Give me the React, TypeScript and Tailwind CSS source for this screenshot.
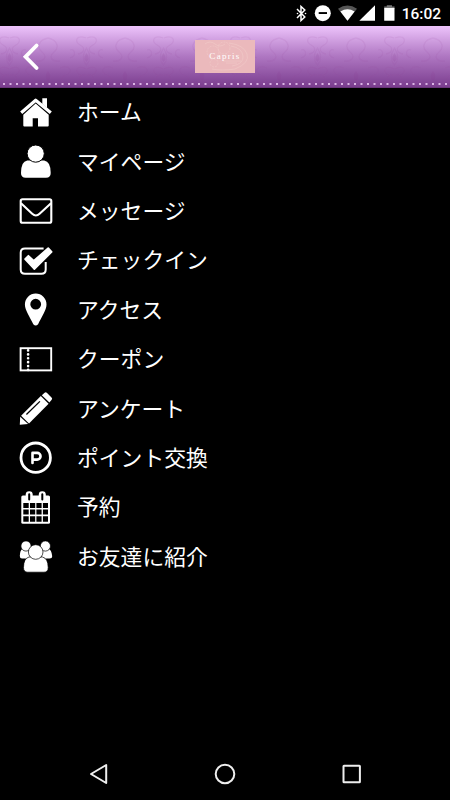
import type { ReactNode } from "react";

type MenuItem = {
  label: string;
  icon: ReactNode;
};

const menuItems: MenuItem[] = [
  {
    label: "ホーム",
    icon: (
      <>
        <path d="M23.3 2.3H28V12L23.3 8Z" />
        <path d="M2.2 16.7 16.7 4.2 31.8 16.7" fill="none" stroke="white" strokeWidth="3.2" strokeLinejoin="round" />
        <path d="M16.7 7.6 29.7 18.8V29.6Q29.7 30.6 28.7 30.6H19V22.3H13.7V30.6H5.3Q4.3 30.6 4.3 29.6V18.8Z" />
      </>
    ),
  },
  {
    label: "マイページ",
    icon: (
      <>
        <path d="M8.2 15.5H25.2Q31.7 16.5 31.7 28Q31.7 32.8 27 32.8H6.7Q2 32.8 2 28Q2 16.5 8.2 15.5Z" />
        <circle cx="16.7" cy="8.6" r="8.6" stroke="black" strokeWidth="1" />
      </>
    ),
  },
  {
    label: "メッセージ",
    icon: (
      <g fill="none" stroke="white" strokeWidth="2.1">
        <rect x="1.7" y="5.2" width="30.6" height="23.6" rx="1.8" />
        <path d="M2 9.3 13.2 19.8Q16.9 23.2 20.6 19.8L32 9.3" />
      </g>
    ),
  },
  {
    label: "チェックイン",
    icon: (
      <>
        <path d="M24.6 4.4H6Q1.7 4.4 1.7 8.7V25.5Q1.7 29.8 6 29.8H22.4Q26.7 29.8 26.7 25.5V18" fill="none" stroke="white" strokeWidth="2" />
        <path d="M6.1 15.1 9.4 11.8 14.9 16.8 29.2 4.2 32.6 7.9 15.3 25Z" strokeWidth="1.8" stroke="white" strokeLinejoin="round" />
      </>
    ),
  },
  {
    label: "アクセス",
    icon: (
      <path
        fillRule="evenodd"
        d="M16.7 .6A10.8 10.8 0 0 1 27.5 11.4C27.5 17 22.5 24 19.1 31.2Q16.7 34 14.3 31.2C10.9 24 5.9 17 5.9 11.4A10.8 10.8 0 0 1 16.7 .6ZM16.7 5.8A5.4 5.4 0 1 0 16.7 16.6A5.4 5.4 0 1 0 16.7 5.8Z"
      />
    ),
  },
  {
    label: "クーポン",
    icon: (
      <g fill="none" stroke="white">
        <rect x="1.6" y="5.2" width="30.6" height="22.2" strokeWidth="1.9" />
        <path d="M9.1 7.4V27" strokeWidth="2.6" strokeLinecap="round" strokeDasharray="0.1 3.8" />
      </g>
    ),
  },
  {
    label: "アンケート",
    icon: (
      <>
        <path d="M.8 32.8 1.2 24.8 9.1 32.1Z" />
        <path d="M2.1 23.8 21.8 4 29.6 11.8 10 31.5Z" />
        <path d="M22.8 3.2 25.6 .7Q26.7 -.2 27.8 .8L32.5 5.5Q33.7 6.6 32.7 7.8L30.4 10.6Z" />
        <path d="M7.4 22.5 20.9 9.4" stroke="black" strokeWidth="1.3" />
      </>
    ),
  },
  {
    label: "ポイント交換",
    icon: (
      <g fill="none" stroke="white">
        <circle cx="16.7" cy="16.7" r="14.7" strokeWidth="2.8" />
        <path d="M13.5 22V11.9H18.2A3.3 3.3 0 0 1 18.2 18.6H13.5" strokeWidth="2.6" strokeLinecap="round" strokeLinejoin="round" />
      </g>
    ),
  },
  {
    label: "予約",
    icon: (
      <>
        <rect x="2.3" y="4.4" width="28.7" height="28.4" rx="1.6" />
        <rect x="6.7" y=".2" width="7" height="10" rx="3.4" />
        <rect x="19.8" y=".2" width="7" height="10" rx="3.4" />
        <path d="M10.2 3.2V8.4M23.3 3.2V8.4" stroke="black" strokeWidth="2" strokeLinecap="round" />
        <path
          fill="black"
          d="M4.3 12.1H9.7V17H4.3ZM11 12.1H16.2V17H11ZM17.4 12.1H22.6V17H17.4ZM23.9 12.1H29V17H23.9ZM4.3 18.6H9.7V23.6H4.3ZM11 18.6H16.2V23.6H11ZM17.4 18.6H22.6V23.6H17.4ZM23.9 18.6H29V23.6H23.9ZM4.3 25.2H9.7V30.7H4.3ZM11 25.2H16.2V30.7H11ZM17.4 25.2H22.6V30.7H17.4ZM23.9 25.2H29V30.7H23.9Z"
        />
      </>
    ),
  },
  {
    label: "お友達に紹介",
    icon: (
      <>
        <path d="M3.5 9H11V18.5H3Q.8 18.5 .8 16Q1 10 3.5 9ZM29.8 9H22.5V18.5H30.5Q33.2 18.5 33.2 16Q32.5 10 29.8 9Z" />
        <g stroke="black" strokeWidth=".7">
          <circle cx="7" cy="6" r="5.1" />
          <circle cx="26.4" cy="6" r="5.1" />
          <path d="M10 17H23.5Q29.2 18.5 29.2 27.5Q29.2 32.2 25 32.2H8.7Q4.5 32.2 4.5 27.5Q4.5 18.5 10 17Z" />
          <circle cx="16.7" cy="12" r="7.3" />
        </g>
      </>
    ),
  },
];

const StatusBar = () => (
  <div className="flex h-[26px] items-center justify-end pr-[9px]">
    <svg width="110" height="26" viewBox="290 0 110 26" fill="white">
      <path d="M297 9 304.8 17 301 20.5V6.5L304.8 10 297 18" fill="none" stroke="white" strokeWidth="1.5" />
      <circle cx="297.5" cy="13.5" r=".8" />
      <circle cx="305.5" cy="13.5" r=".8" />
      <circle cx="322.8" cy="13.2" r="8" />
      <rect x="318.7" y="12.1" width="8.3" height="1.9" fill="black" />
      <path d="M338 8.8Q347.5 2 357 8.8L347.5 20.8Z" fill="#555" />
      <path d="M340.4 11.6Q347.5 6.8 354.6 11.6L347.5 20.8Z" />
      <path d="M359.3 20.8H375V5.2Z" />
      <path d="M386.8 5.2H392V6.5H394.5V9H384.2V6.5H386.8Z" fill="#777" />
      <rect x="384.2" y="8" width="10.3" height="12.8" rx=".6" />
    </svg>
    <span className="mt-[3px] ml-[2px] font-[Roboto] text-[15.5px] leading-none font-medium text-white">16:02</span>
  </div>
);

const Header = () => (
  <header className="relative flex h-[62px] items-center justify-center bg-linear-to-b from-[#edc3fb] via-[#b078c3] via-48% to-[#793b8d]">
    <svg className="absolute inset-0" width="450" height="62" fill="none">
      <defs>
        {/* faint damask wallpaper */}
        <pattern id="damask" x="-29" y="0" width="77" height="62" patternUnits="userSpaceOnUse">
          <g stroke="#8f3f94" strokeWidth="1.3" opacity=".1">
            <path d="M38 12C28 8 26 16 32 19S36 27 30 28M39 12C49 8 51 16 45 19S41 27 47 28" />
            <path d="M0 12C9 14 12 21 6 26S4 36 12 35M77 12C68 14 65 21 71 26S73 36 65 35" />
            <path d="M38.5 22C34 29 34 34 38.5 39C43 34 43 29 38.5 22ZM22 24C27 22 29 30 22 32M55 24C50 22 48 30 55 32" />
            <path d="M38 43C29 37 25 47 33 49M39 43C48 37 52 47 44 49M38 49C30 47 29 57 36 58M39 49C47 47 48 57 41 58" />
            <path d="M12 42C22 38 26 46 18 49S14 58 22 58M65 42C55 38 51 46 59 49S63 58 55 58" />
          </g>
          <path d="M0 45Q5 50 0 56ZM77 45Q72 50 77 56ZM38.5 27Q43 33 38.5 36Q34 33 38.5 27Z" fill="#8b388e" opacity=".14" />
        </pattern>
      </defs>
      <rect y="5" width="450" height="57" fill="url(#damask)" />
      <path d="M3 58H450" stroke="#dcb5e5" strokeWidth="2" strokeDasharray="2 4.5" />
      <path d="M0 61.5H450" stroke="#693479" />
      <path d="M36.6 19.5 25.5 30.8 36.6 42" stroke="white" strokeWidth="3.8" strokeLinecap="round" />
    </svg>
    <div className="relative mb-[2px] flex h-[33px] w-[60px] items-center justify-center bg-[#ebb9bc]">
      <svg className="absolute inset-0" width="60" height="33" fill="none" stroke="#f5d4d0" strokeWidth=".7" opacity=".6">
        <circle cx="18" cy="12" r="6" strokeDasharray="2 1" />
        <circle cx="19" cy="23" r="4" strokeDasharray="2 1" />
        <circle cx="29" cy="8" r="6" strokeDasharray="2 1" />
        <path d="M34 3Q49 5 52 14T40 29Q26 31 17 29M36 6Q47 8 48 16T37 26M10 4Q15 0 20 4T30 4M28 21H46M31 23H42" />
      </svg>
      <span className="relative font-['Liberation_Serif'] text-[9px] leading-none tracking-[1.3px] text-white">Capris</span>
    </div>
  </header>
);

const NavigationBar = () => (
  <nav className="flex h-[52px] items-center justify-between px-[88px]">
    <svg width="20" height="22" fill="none" stroke="#eee" strokeWidth="2" strokeLinejoin="round">
      <path d="M3 11 18.2 2V20Z" />
    </svg>
    <svg width="22" height="22" fill="none" stroke="#eee" strokeWidth="2">
      <circle cx="11" cy="11" r="9.3" />
    </svg>
    <svg width="20" height="22" fill="none" stroke="#eee" strokeWidth="2">
      <rect x="1.5" y="2.8" width="16.4" height="16.4" rx=".5" />
    </svg>
  </nav>
);

const App = () => {
  return (
    <div className="flex h-[800px] w-[450px] flex-col overflow-hidden bg-black">
      <StatusBar />
      <Header />
      <ul className="flex-1">
        {menuItems.map((item) => (
          <li key={item.label} className="flex h-[49.4px] items-center pl-[19px]">
            <svg width="34" height="34" viewBox="0 0 34 34" fill="white" className="shrink-0 overflow-visible">
              {item.icon}
            </svg>
            <span className="mb-[3px] ml-6 font-['Noto_Sans_CJK_JP',sans-serif] text-[21.8px] leading-none text-white">
              {item.label}
            </span>
          </li>
        ))}
      </ul>
      <NavigationBar />
    </div>
  );
};

export default App;
